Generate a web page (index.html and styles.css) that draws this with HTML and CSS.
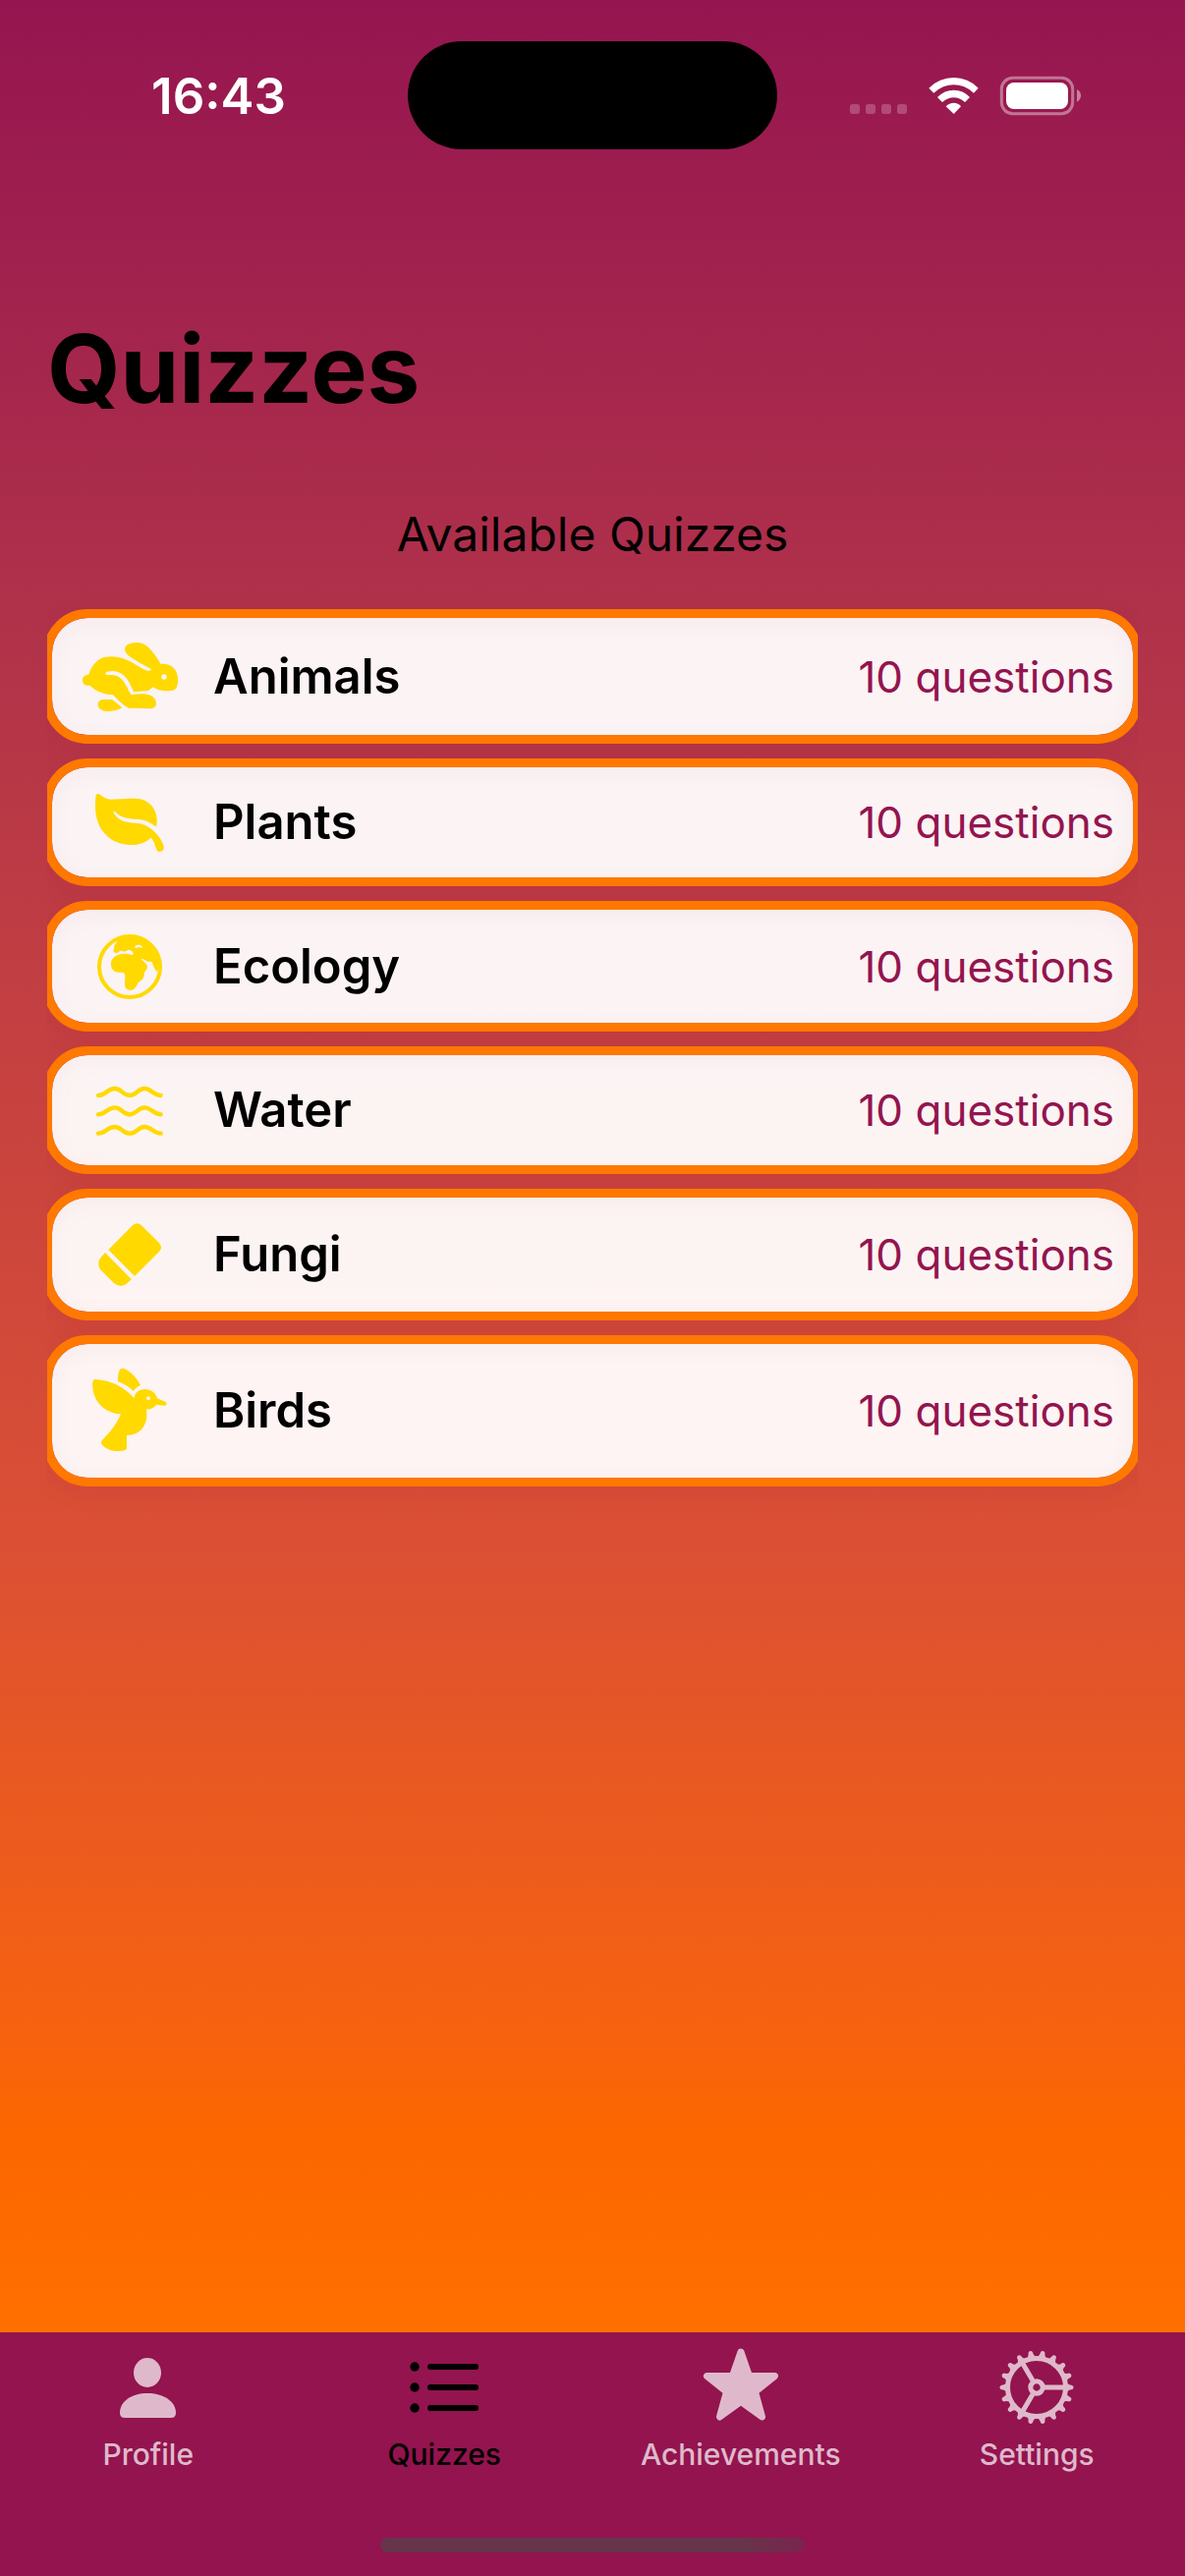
FILE: index.html
```html
<!DOCTYPE html>
<html lang="en">
<head>
<meta charset="utf-8">
<meta name="viewport" content="width=device-width, initial-scale=1">
<title>Quizzes</title>
<link rel="stylesheet" href="styles.css">
</head>
<body>
<div class="app">
  <header class="status">
    <time class="status-time">16:43</time>
    <div class="island"></div>
    <svg class="status-icons" viewBox="75 78 708 126" aria-hidden="true">
      <g fill="#fff" fill-opacity=".22">
        <rect x="75" y="168" width="30" height="30" rx="8"/>
        <rect x="123" y="168" width="30" height="30" rx="8"/>
        <rect x="171" y="168" width="30" height="30" rx="8"/>
        <rect x="219" y="168" width="30" height="30" rx="8"/>
      </g>
      <g fill="#fff">
        <path d="M316 119Q348 87 392 87T467 119L453 134Q425 109 392 109T331 134Z"/>
        <path d="M342 147Q363 125 392 125T441 147L426 162Q411 148 392 148T357 162Z"/>
        <path d="M368 175Q378 164 392 164T414 175L392 198Z"/>
      </g>
      <rect x="538" y="88" width="217" height="109" rx="34" fill="none" stroke="#fff" stroke-opacity=".4" stroke-width="9"/>
      <rect x="552" y="102" width="189" height="81" rx="24" fill="#fff"/>
      <path d="M768 123Q780 129 780 142T768 161Z" fill="#fff" fill-opacity=".45"/>
    </svg>
  </header>

  <main class="content">
    <h1 class="title">Quizzes</h1>
    <h2 class="subtitle">Available Quizzes</h2>
    <ul class="quizzes">
      <li><a class="quiz" href="#animals">
        <svg class="quiz-icon" viewBox="126 117 300 237" height="79" aria-hidden="true">
          <path d="M261 153C260 141 275 133 294 132C316 131 329 141 340 154C352 168 360 180 371 198C390 195 406 203 415 216C424 230 425 250 421 264C418 275 410 279 400 279C380 281 362 278 346 268C341 275 334 280 325 280L288 283C278 260 270 236 246 224C233 218 218 218 206 221C199 224 202 232 211 231C232 229 246 235 256 249C266 263 271 277 281 292C294 290 307 289 318 289C338 289 357 300 357 318C356 330 347 334 337 334C315 333 295 331 275 333C257 325 241 308 224 291C199 291 174 282 155 263C141 266 131 257 132 245C133 235 141 230 151 230C158 203 178 180 202 176C233 171 256 178 280 191C299 201 317 214 330 218C339 220 346 214 338 211C320 201 297 189 279 177C269 170 262 163 261 153Z"/>
          <path d="M196 306H222L253 331C232 343 206 344 192 339C177 333 175 316 185 309Q189 306 196 306Z"/>
          <circle class="cutout" cx="381" cy="237" r="8"/>
        </svg>
        <span class="quiz-name">Animals</span>
        <span class="quiz-count">10 questions</span>
      </a></li>
      <li><a class="quiz" href="#plants">
        <svg class="quiz-icon" viewBox="126 573 300 216" height="72" aria-hidden="true">
          <path d="M173 598C176 592 182 593 186 597C195 605 205 610 219 611C245 611 273 606 302 609C335 613 356 638 359 669Q360 682 358 692Q355 695 350 690C337 680 319 673 300 672C274 670 250 668 233 650C228 644 224 650 229 656C245 677 265 681 292 683C315 684 330 691 344 703C362 718 374 735 380 754C382 764 375 771 367 771C359 770 357 762 354 753C351 743 347 735 341 728C324 744 301 751 276 750C241 749 212 734 192 706C171 678 168 633 173 598Z"/>
        </svg>
        <span class="quiz-name">Plants</span>
        <span class="quiz-count">10 questions</span>
      </a></li>
      <li><a class="quiz" href="#ecology">
        <svg class="quiz-icon" viewBox="126 138 300 225" height="75" aria-hidden="true">
          <circle cx="276" cy="252" r="93" fill="none" stroke="#ffd900" stroke-width="12"/>
          <path d="M237 177C230 184 226 193 228 199C223 205 229 211 237 210C243 209 244 202 250 203C257 207 264 206 270 201C278 198 280 205 286 206C288 211 287 216 282 216C270 212 256 210 242 215C226 220 217 232 219 248C222 265 235 271 253 269C263 270 262 279 262 286L261 307C262 320 271 325 281 324C293 321 297 309 303 299C315 293 321 284 320 272C325 263 332 257 329 247C325 240 315 236 311 229C316 225 323 232 330 236C337 238 342 234 345 238C347 250 352 259 359 268L369 240L357 202L330 174L296 160L262 158L235 168Z"/>
          <path class="cutout" d="M292 190C296 184 309 184 314 190C317 194 313 195 307 193Q302 191 296 195Q290 196 292 190Z"/>
        </svg>
        <span class="quiz-name">Ecology</span>
        <span class="quiz-count">10 questions</span>
      </a></li>
      <li><a class="quiz" href="#water">
        <svg class="quiz-icon" viewBox="126 582 300 216" height="72" aria-hidden="true">
          <g fill="none" stroke="#ffd900" stroke-width="13" stroke-linecap="round">
            <path d="M180 645C204 645 207 624 230 624S253 645 276 645S299 624 321 624S348 645 371 645"/>
            <path d="M180 703C204 703 207 682 230 682S253 703 276 703S299 682 321 682S348 703 371 703"/>
            <path d="M180 761C204 761 207 741 230 741S253 761 276 761S299 741 321 741S348 761 371 761"/>
          </g>
        </svg>
        <span class="quiz-name">Water</span>
        <span class="quiz-count">10 questions</span>
      </a></li>
      <li><a class="quiz" href="#fungi">
        <svg class="quiz-icon" viewBox="126 117 300 228" height="76" aria-hidden="true">
          <path d="M211 216L285 142Q298 129 312 142L365 194Q379 208 366 222L291 297Z"/>
          <path d="M201 225L281 306L273 314Q251 337 227 317L188 278Q173 259 188 239Z"/>
        </svg>
        <span class="quiz-name">Fungi</span>
        <span class="quiz-count">10 questions</span>
      </a></li>
      <li><a class="quiz" href="#birds">
        <svg class="quiz-icon" viewBox="126 564 300 288" height="96" aria-hidden="true">
          <path d="M163 618Q165 611 173 612C219 615 258 635 290 669C291 653 304 642 322 642C342 642 356 654 360 670L384 680Q390 683 389 688Q387 693 380 692L358 689C350 699 339 704 327 703C330 726 328 744 315 761C304 775 288 782 267 783V823Q266 828 260 829C235 834 207 829 192 812Q186 806 191 799C214 776 235 750 249 718C196 715 158 674 163 618Z"/>
          <path d="M240 618C239 600 243 585 248 580Q253 577 259 579C280 588 297 608 309 629Q296 635 287 647C273 634 257 625 240 618Z"/>
          <circle class="cutout" cx="333" cy="670" r="6"/>
        </svg>
        <span class="quiz-name">Birds</span>
        <span class="quiz-count">10 questions</span>
      </a></li>
    </ul>
  </main>

  <footer class="bottom">
    <nav class="tabs" aria-label="Main">
      <a class="tab" href="#profile">
        <svg class="tab-icon" viewBox="-40 -40 80 80" aria-hidden="true">
          <ellipse cx="-1" cy="-15" rx="14" ry="15"/>
          <path d="M-29 26C-29 14-17 6-1 6S28 14 28 26Q28 31 23 31H-24Q-29 31-29 26Z"/>
        </svg>
        <span>Profile</span>
      </a>
      <a class="tab tab-active" href="#quizzes" aria-current="page">
        <svg class="tab-icon" viewBox="-40 -40 80 80" aria-hidden="true">
          <circle cx="-30" cy="-21" r="4.700"/><circle cx="-30" cy="0" r="4.700"/><circle cx="-30" cy="21" r="4.700"/>
          <path d="M-14-21H32M-14 0H32M-14 21H32" stroke="currentColor" stroke-width="6" stroke-linecap="round"/>
        </svg>
        <span>Quizzes</span>
      </a>
      <a class="tab" href="#achievements">
        <svg class="tab-icon" viewBox="-40 -40 80 80" aria-hidden="true">
          <path d="M0-36L8.500-11.500H34.500L14.500 4.500L21.500 30L0 14.500L-21.500 30L-14.500 4.500L-34.500-11.500H-8.500Z" stroke="currentColor" stroke-width="7" stroke-linejoin="round"/>
        </svg>
        <span>Achievements</span>
      </a>
      <a class="tab" href="#settings">
        <svg class="tab-icon" viewBox="-40 -40 80 80" aria-hidden="true">
          <defs>
            <path id="tooth" d="M29-5L34-2.500Q37.500-2.500 37.500 0T34 2.500L29 5Z"/>
            <g id="teeth"><use href="#tooth"/><use href="#tooth" transform="rotate(20)"/><use href="#tooth" transform="rotate(40)"/></g>
            <g id="half"><use href="#teeth"/><use href="#teeth" transform="rotate(60)"/><use href="#teeth" transform="rotate(120)"/></g>
          </defs>
          <use href="#half"/><use href="#half" transform="rotate(180)"/>
          <g fill="none" stroke="currentColor" stroke-width="5">
            <circle r="29.500"/>
            <circle r="6.200"/>
            <path d="M8 0H28M-4-7L-14-24M-4 7L-14 24"/>
          </g>
        </svg>
        <span>Settings</span>
      </a>
    </nav>
    <div class="home-indicator"></div>
  </footer>
</div>
</body>
</html>
```
FILE: styles.css
```css
* {
  box-sizing: border-box;
}

body {
  margin: 0;
  font-family: Inter, "Liberation Sans", sans-serif;
  color: #000;
}

a {
  color: inherit;
  text-decoration: none;
}

.app {
  display: flex;
  flex-direction: column;
  min-height: 100vh;
  background: linear-gradient(#951550, #b0324a 24%, #c44041 40%, #db5034 60%, #f7620f 79%, #fc6700 83%, #ff7000 91%);
}

.status {
  display: grid;
  grid-template-columns: 1fr 376px 1fr;
  align-items: center;
  padding-top: 42px;
}

.status-time {
  padding-left: 30px;
  text-align: center;
  font-size: 51px;
  font-weight: 600;
  color: #fff;
}

.island {
  height: 110px;
  border-radius: 55px;
  background: #000;
}

.status-icons {
  width: 236px;
  height: 42px;
  margin-left: 74px;
}

.content {
  flex: 1;
  padding: 163px 48px 0;
}

.title {
  margin: 0;
  font-size: 96px;
  font-weight: 700;
  line-height: 120px;
}

.subtitle {
  margin: 77px 0 44px;
  font-size: 48px;
  font-weight: 400;
  line-height: 64px;
  text-align: center;
}

.quizzes {
  display: flex;
  flex-direction: column;
  gap: 15px;
  margin: 0;
  padding: 0;
  list-style: none;
  overflow-x: clip;
}

.quiz {
  display: flex;
  align-items: center;
  margin: 0 -4px;
  padding: 20px 19px 20px 29px;
  border: 9px solid #ff7800;
  border-radius: 45px;
  background: rgba(255, 255, 255, 0.94) padding-box;
  box-shadow: 0 6px 24px rgba(150, 20, 80, 0.1), inset 0 4px 24px rgba(150, 20, 80, 0.04);
}

.quiz-icon {
  width: 100px;
  margin-right: 35px;
  fill: #ffd900;
}

.quiz-icon .cutout {
  fill: #fbf4f5;
}

.quiz-name {
  flex: 1;
  font-size: 49px;
  font-weight: 600;
  line-height: 60px;
}

.quiz-count {
  font-size: 44px;
  line-height: 58px;
  color: #93144f;
}

.bottom {
  padding: 16px 0 24px;
  background: #93144e;
}

.tabs {
  display: grid;
  grid-template-columns: repeat(4, 1fr);
}

.tab {
  display: flex;
  flex-direction: column;
  align-items: center;
  gap: 10px;
  font-size: 30px;
  font-weight: 500;
  line-height: 36px;
  color: #dfb9cb;
}

.tab-active {
  color: #000;
}

.tab-icon {
  width: 80px;
  height: 80px;
  fill: currentColor;
}

.home-indicator {
  width: 432px;
  height: 15px;
  margin: 67px auto 0;
  border-radius: 8px;
  background: linear-gradient(90deg, #66354a 85%, #7a2450);
}
```
